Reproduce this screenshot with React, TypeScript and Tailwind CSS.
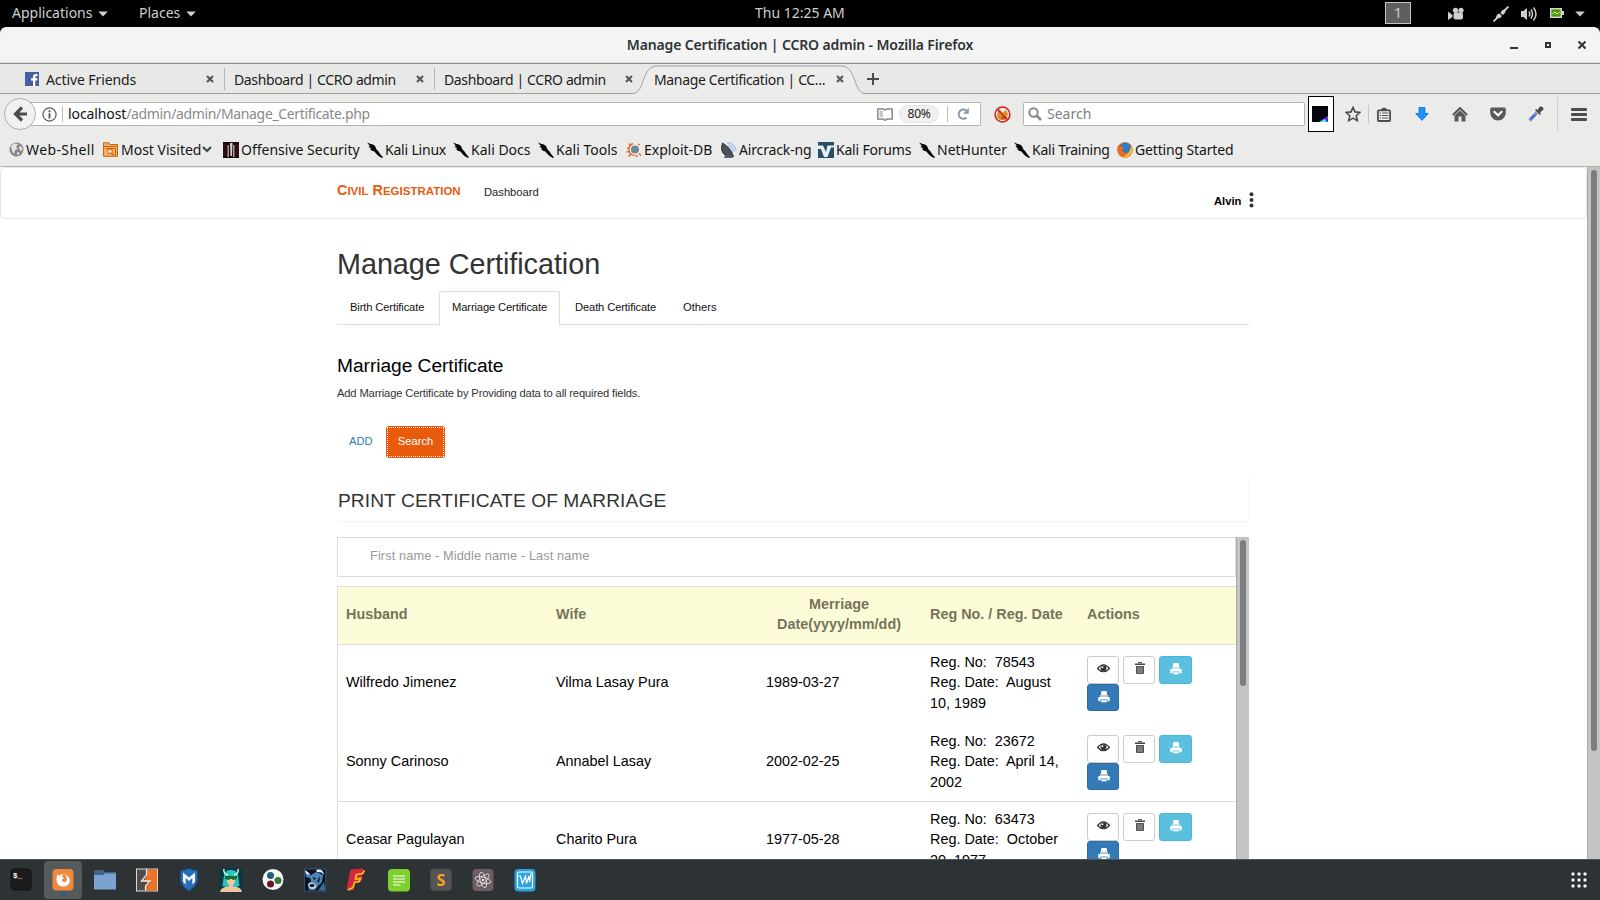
import type { ReactNode } from "react";

const DragonIcon = () => (
  <svg width="16" height="16" viewBox="0 0 16 16">
    <path d="M0 0.300 L3 1.800 L6 2.600 L8.200 4.200 L9.300 7.200 L11.500 9.500 L13.500 12.500 L16 15.300 L15 16 L11.500 14 L9 11.500 L7.500 9.500 L5.500 9 L3 7.300 L4.200 6.300 L1.500 5 L2.800 4 Z" fill="#050505" />
  </svg>
);

const GlobeIcon = () => (
  <svg width="15" height="15" viewBox="0 0 15 15">
    <circle cx="7.500" cy="7.500" r="7" fill="#878787" />
    <path d="M2 4 L5 1.500 L9 2 L7 5 L9 7 L6 8 L5 12 L3 9 Z M10 4 L13 5 L13.500 8 L11 9 Z M8 10 L11 11 L8.500 13.500 Z" fill="#e6e6e6" />
  </svg>
);

const FolderIcon = () => (
  <svg width="15" height="15" viewBox="0 0 15 15">
    <path d="M0.500 0.800 H6 L7 2.500 H14.500 V14.300 H0.500 Z" fill="#f3b069" stroke="#cc660c" />
    <path d="M0.500 4.500 H14.500 M2.500 6.500 H12.500 V14" stroke="#cc660c" fill="none" />
    <circle cx="7" cy="9.300" r="2.300" fill="#fbe3c5" stroke="#cc660c" />
    <path d="M8.500 11 L11 13.500" stroke="#cc660c" strokeWidth="1.500" />
  </svg>
);

const OffsecIcon = () => (
  <svg width="16" height="16" viewBox="0 0 16 16">
    <rect width="16" height="16" fill="#1a0a0a" />
    <rect x="0" y="2" width="4" height="12" fill="#2e1012" />
    <rect x="12" y="2" width="4" height="12" fill="#2e1012" />
    <path d="M4.500 3 H6 V15 H4.500Z M10 3 H11.500 V15 H10Z" fill="#a89c9c" />
    <path d="M7 1 H9.500 L9 14 H7.500 Z" fill="#d6cfcf" />
  </svg>
);

const ExploitIcon = () => (
  <svg width="16" height="16" viewBox="0 0 16 16">
    <path d="M3 1.500 L5 4 M1 6 L4 6.500 M0.500 10 L4 9.500 M2.500 14.500 L5 12 M11 15 L10 12.500 M15 13.500 L12.500 11 M13.500 2 L11.500 4" stroke="#e8662c" strokeWidth="1.500" />
    <path d="M7 1.500 Q2 4 3.500 9.500 Q5 13.500 9 13" stroke="#e8662c" strokeWidth="1.700" fill="none" />
    <circle cx="9" cy="7.500" r="4.700" fill="#6f8796" stroke="#f6f6f6" strokeWidth="1.200" />
  </svg>
);

const DishIcon = () => (
  <svg width="16" height="16" viewBox="0 0 16 16">
    <path d="M6 0.800 Q14 1 15 9 M7 3.500 Q12 4.500 12.500 10" stroke="#b5c9ea" strokeWidth="1.800" fill="none" />
    <path d="M1.500 1 Q-1 7 2 11 Q6 16 12.500 14.500 Q10 6 1.500 1Z" fill="#49545a" stroke="#2d3438" />
    <path d="M4 13 L3 16 H12 L10 14Z" fill="#59646a" />
  </svg>
);

const ForumIcon = () => (
  <svg width="16" height="16" viewBox="0 0 16 16">
    <rect width="16" height="16" fill="#244e69" />
    <path d="M0 3.500 H5 L8 10 L9.500 3.500 H16 V5.500 H13 L9.500 15 H6 L3 7 H0Z" fill="#e9eef0" />
  </svg>
);

const FirefoxIcon = () => (
  <svg width="16" height="16" viewBox="0 0 16 16">
    <circle cx="8" cy="8" r="7.700" fill="#e2601b" />
    <circle cx="8.500" cy="6" r="5.500" fill="#2a7fc4" />
    <path d="M14 3 Q17 8 14 12 Q10 17 4 14 Q-1 10 1 3 L3 5 Q6 4 7 6 L5 8 Q6 11 9 11 Q13 11 13.500 6Z" fill="#ea6a20" />
    <path d="M14.500 4.500 Q17 11 11 14.500 Q8 15.500 6 14.500 Q13 12 13.500 6Z" fill="#fbc03a" />
  </svg>
);

const bookmarks: { label: string; icon: ReactNode; width: string; text?: string; menu?: boolean }[] = [
  { label: "Web-Shell", icon: <GlobeIcon />, width: "w-[94px]", text: "-ml-px tracking-[0.4px]" },
  { label: "Most Visited", icon: <FolderIcon />, width: "w-[120px]", menu: true },
  { label: "Offensive Security", icon: <OffsecIcon />, width: "w-[144px]" },
  { label: "Kali Linux", icon: <DragonIcon />, width: "w-[86px]", text: "tracking-[-0.2px]" },
  { label: "Kali Docs", icon: <DragonIcon />, width: "w-[85px]" },
  { label: "Kali Tools", icon: <DragonIcon />, width: "w-[88px]" },
  { label: "Exploit-DB", icon: <ExploitIcon />, width: "w-[95px]" },
  { label: "Aircrack-ng", icon: <DishIcon />, width: "w-[97px]", text: "tracking-[-0.15px]" },
  { label: "Kali Forums", icon: <ForumIcon />, width: "w-[101px]", text: "tracking-[-0.2px]" },
  { label: "NetHunter", icon: <DragonIcon />, width: "w-[95px]" },
  { label: "Kali Training", icon: <DragonIcon />, width: "w-[103px]", text: "tracking-[-0.25px]" },
  { label: "Getting Started", icon: <FirefoxIcon />, width: "w-[120px]", text: "tracking-[-0.15px]" },
];

const Caret = ({ className = "" }: { className?: string }) => (
  <svg className={className} width="10" height="6" viewBox="0 0 10 6">
    <path d="M0.300 0.500 H9.700 L5 5.500Z" fill="#cfcfcf" />
  </svg>
);

const CloseMark = () => (
  <svg width="8" height="8" viewBox="0 0 8 8">
    <path d="M1 1 L7 7 M7 1 L1 7" stroke="#555a5c" strokeWidth="2.200" />
  </svg>
);

function TopBar() {
  return (
    <div className="flex h-[27px] shrink-0 items-center bg-black text-[14px] text-[#cfcfcf]">
      <div className="ml-3 flex w-[127px] items-center">
        <span className="w-[86px] whitespace-nowrap pb-[2px]">Applications</span>
        <Caret />
      </div>
      <div className="flex w-[616px] items-center">
        <span className="w-[47px] whitespace-nowrap pb-[2px]">Places</span>
        <Caret />
      </div>
      <span className="w-[630px] whitespace-nowrap pb-[2px]">Thu 12:25 AM</span>
      <div className="mb-px flex h-[22px] w-[26px] items-center justify-center border border-[#c4c4c4] bg-[#5e5e5e] pb-px">1</div>
      <svg className="ml-[37px]" width="16" height="14" viewBox="0 0 16 14">
        <circle cx="7.500" cy="3.300" r="2.600" fill="#cfcfcf" />
        <circle cx="13" cy="3.300" r="2.600" fill="#cfcfcf" />
        <rect x="5.500" y="5.500" width="9.500" height="7" rx="2" fill="#cfcfcf" />
        <path d="M0 4.500 L4.500 8 V10 L0 13Z" fill="#cfcfcf" />
      </svg>
      <svg className="ml-[29px]" width="16" height="16" viewBox="0 0 16 16">
        <path d="M0.500 15.500 L5 11 M11 5 L15.500 0.500" stroke="#cfcfcf" strokeWidth="1.800" />
        <path d="M3 12.500 Q3 8 6.500 7.500 L9 10 Q7.500 13 3 12.500Z M7.500 7 Q8.500 3.500 13 3 Q12.500 8 9.500 9Z" fill="#cfcfcf" />
      </svg>
      <svg className="ml-3" width="17" height="16" viewBox="0 0 17 16">
        <path d="M0 5 H2.500 L6 2 V14 L2.500 11 H0Z" fill="#cfcfcf" />
        <path d="M8 5.500 Q9.500 8 8 10.500 M10 3.500 Q13 8 10 12.500 M12.500 1.500 Q17.500 8 12.500 14.500" stroke="#cfcfcf" strokeWidth="1.500" fill="none" />
      </svg>
      <svg className="mb-px ml-3" width="14" height="10" viewBox="0 0 14 10">
        <rect x="0.700" y="0.700" width="10.600" height="8.600" fill="#4e9a06" stroke="#d6d6d6" strokeWidth="1.400" />
        <rect x="12" y="3" width="2" height="4" fill="#cfcfcf" />
        <path d="M2.500 6 L5 4 L7 6 L9.500 4" stroke="#e8f5dc" fill="none" strokeWidth="1" />
      </svg>
      <Caret className="ml-[11px]" />
    </div>
  );
}

function TitleBar() {
  return (
    <div className="bg-black">
      <div className="relative flex h-[37px] items-center justify-center rounded-t-[6px] border-b border-[#8e8e88] bg-[#f4f4f4] shadow-[inset_0_-1px_0_#dcdcda]">
        <span className="whitespace-nowrap pb-[2px] text-[14px] font-semibold tracking-[-0.14px] text-[#2e3436]">
          Manage Certification | CCRO admin - Mozilla Firefox
        </span>
        <svg className="absolute right-0 top-0" width="100" height="36" viewBox="0 0 100 36">
          <path d="M10 21 H18" stroke="#2e3436" strokeWidth="2" />
          <rect x="46" y="16" width="4" height="4" fill="none" stroke="#2e3436" strokeWidth="2" />
          <path d="M78.500 14.500 L85.500 21.500 M85.500 14.500 L78.500 21.500" stroke="#2e3436" strokeWidth="2" />
        </svg>
      </div>
    </div>
  );
}

function TabStrip() {
  return (
    <div className="relative flex h-[30px] shrink-0 items-center border-b border-[#a0a09c] bg-[#e8e8e7] text-[14px] text-[#1c1c1c]">
      <div className="mt-px flex h-[22px] w-[225px] items-center border-r border-[#b5b5b2] pl-[25px]">
        <svg width="14" height="14" viewBox="0 0 14 14">
          <rect width="14" height="14" fill="#4460a0" />
          <path d="M8 14 V8.500 H6 V6.300 H8 V4.800 Q8 2 10.800 2 H12.500 V4.200 H11.200 Q10.300 4.200 10.300 5 V6.300 H12.500 L12.200 8.500 H10.300 V14Z" fill="#fff" />
        </svg>
        <span className="ml-[7px] w-[160px] whitespace-nowrap tracking-[-0.1px]">Active Friends</span>
        <CloseMark />
      </div>
      <div className="mt-px flex h-[22px] w-[210px] items-center border-r border-[#b5b5b2] pl-[9px]">
        <span className="w-[182px] whitespace-nowrap tracking-[-0.37px]">Dashboard | CCRO admin</span>
        <CloseMark />
      </div>
      <div className="mt-px flex w-[198px] items-center pl-[9px]">
        <span className="w-[183px] whitespace-nowrap tracking-[-0.37px]">Dashboard | CCRO admin</span>
        <CloseMark />
      </div>
      <div className="relative flex h-full w-[232px] items-center pl-[21px] pt-px">
        <svg className="absolute left-0 top-0" width="232" height="31" viewBox="0 0 232 31">
          <path d="M0 31 V29.500 C12 29.500 8 2.500 24 2.500 H208 C224 2.500 220 29.500 232 29.500 V31Z" fill="#ececeb" />
          <path d="M0 29.500 C12 29.500 8 2 24 2 H208 C224 2 220 29.500 232 29.500" fill="none" stroke="#9da3a8" />
        </svg>
        <span className="relative w-[182px] whitespace-nowrap tracking-[-0.35px]">Manage Certification | CC...</span>
        <span className="relative"><CloseMark /></span>
      </div>
      <svg className="ml-[2px] mt-px" width="12" height="12" viewBox="0 0 12 12">
        <path d="M0 6 H12 M6 0 V12" stroke="#4c4c4c" strokeWidth="2" />
      </svg>
    </div>
  );
}

function NavBar() {
  return (
    <div className="flex h-[40px] shrink-0 items-center bg-[#ebebea] text-[14px]">
      <div className="relative ml-[4px] flex h-[32px] w-[977px] items-center">
        <div className="absolute left-[20px] right-0 top-[4px] h-[24px] rounded-[2px] border border-[#b4b4b0] bg-white" />
        <div className="relative flex size-[32px] items-center justify-center rounded-full border border-[#b0b0ac] bg-[#f1f1f0]">
          <svg width="15" height="16" viewBox="0 0 15 16">
            <path d="M9 1.500 L2.500 8 L9 14.500 M3 8 H14" stroke="#4d4d4d" strokeWidth="3.200" fill="none" />
          </svg>
        </div>
        <svg className="relative ml-[6px]" width="15" height="15" viewBox="0 0 15 15">
          <circle cx="7.500" cy="7.500" r="6.600" fill="none" stroke="#585858" strokeWidth="1.200" />
          <path d="M7.500 3.300 V5.200 M7.500 6.300 V11.500" stroke="#505050" strokeWidth="1.800" />
        </svg>
        <span className="relative ml-[5px] h-4 w-px bg-[#bdbdbd]" />
        <span className="relative ml-[5px] w-[809px] whitespace-nowrap pb-[2px] tracking-[-0.35px] text-[#8a8a8a]">
          <span className="tracking-[-0.1px] text-[#111]">localhost</span>/admin/admin/Manage_Certificate.php
        </span>
        <svg className="relative" width="16" height="13" viewBox="0 0 16 13">
          <path d="M0.800 1 H6.500 L8 2 L9.500 1 H15.200 V11 H10 L8 12.300 L6 11 H0.800Z" fill="none" stroke="#85898b" strokeWidth="1.500" />
          <path d="M2.500 4 H6 M2.500 6 H5.500 M2.500 8 H6" stroke="#85898b" />
        </svg>
        <span className="relative ml-[6px] flex h-[18px] w-[40px] items-center justify-center rounded-full border border-[#e2e2e2] bg-[#f0f0f0] text-[12px] tracking-[-0.3px] text-[#222]">80%</span>
        <span className="relative ml-[8px] h-4 w-px bg-[#bdbdbd]" />
        <svg className="relative ml-[9px]" width="13" height="14" viewBox="0 0 13 14">
          <path d="M9.500 10.500 A4.600 4.600 0 1 1 9.800 4.200" stroke="#8b98a5" strokeWidth="2" fill="none" />
          <path d="M11.800 1 V6.800 H6Z" fill="#8b98a5" />
        </svg>
      </div>
      <svg className="ml-[13px]" width="17" height="17" viewBox="0 0 17 17">
        <path d="M4 5 L6 3 L8 7 L12 4 L14 8 L12 14 L6 14 L3 11Z" fill="#e08a28" />
        <path d="M8 10 H11 V13 H7Z" fill="#a85c18" />
        <circle cx="8.500" cy="8.500" r="7.400" fill="none" stroke="#cc1f1f" strokeWidth="1.500" />
        <path d="M3.300 3.300 L13.700 13.700" stroke="#cc1f1f" strokeWidth="1.400" />
      </svg>
      <div className="ml-[12px] flex h-[24px] w-[282px] items-center rounded-[2px] border border-[#b4b4b0] bg-white pl-[4px] text-[#808080]">
        <svg width="14" height="14" viewBox="0 0 14 14">
          <circle cx="5.500" cy="5.500" r="4.200" fill="none" stroke="#8a8a8a" strokeWidth="2" />
          <path d="M8.500 8.500 L13 13" stroke="#8a8a8a" strokeWidth="2.600" />
        </svg>
        <span className="ml-[5px] pb-[2px]">Search</span>
      </div>
      <div className="ml-[3px] flex h-[36px] w-[26px] items-center border border-black bg-white pl-[3px]">
        <svg width="16" height="16" viewBox="0 0 16 16">
          <rect width="16" height="16" fill="#05050f" />
          <path d="M7 16 L16 10 V16Z" fill="#19cdf0" />
          <path d="M11 13.500 L16 10 V16Z" fill="#6a1fe0" />
          <path d="M9 16 L13 13 L14 16Z" fill="#5df1ff" />
        </svg>
      </div>
      <svg className="ml-[11px]" width="16" height="16" viewBox="0 0 16 16">
        <path d="M8 1.400 L10 5.900 L14.900 6.400 L11.200 9.700 L12.300 14.600 L8 12.100 L3.700 14.600 L4.800 9.700 L1.100 6.400 L6 5.900Z" fill="none" stroke="#4d4d4d" strokeWidth="1.600" />
      </svg>
      <span className="ml-[7px] h-[18px] w-px bg-[#c4c4c2]" />
      <svg className="ml-[8px]" width="14" height="15" viewBox="0 0 14 15">
        <path d="M3.500 3 Q7 -2 10.500 3" fill="#4d4d4d" />
        <rect x="0.900" y="3.400" width="12.200" height="10.600" rx="1" fill="#f4f4f3" stroke="#4d4d4d" strokeWidth="1.800" />
        <path d="M2.500 6 H4 M2.500 8.500 H4 M2.500 11 H4 M5 6 H11.500 M5 8.500 H11.500 M5 11 H11.500" stroke="#4d4d4d" strokeWidth="1.200" />
      </svg>
      <svg className="ml-[24px]" width="14" height="14" viewBox="0 0 14 14">
        <path d="M4 0.500 H10 V6.500 H13.300 L7 13.400 L0.700 6.500 H4Z" fill="#1e90ff" stroke="#0a6fdc" strokeWidth="0.800" />
      </svg>
      <svg className="ml-[23px]" width="16" height="15" viewBox="0 0 16 15">
        <path d="M0.800 8 L8 1 L15.200 8" fill="none" stroke="#4d4d4d" strokeWidth="1.800" />
        <path d="M2.500 8.500 L8 3.300 L13.500 8.500 V14.500 H9.500 V9.500 H6.500 V14.500 H2.500Z" fill="#5a5a5a" />
      </svg>
      <svg className="ml-[22px]" width="16" height="14" viewBox="0 0 16 14">
        <path d="M1.500 0.500 H14.500 Q15.800 0.500 15.800 2 V6 Q15 13 8 13.600 Q1 13 0.200 6 V2 Q0.200 0.500 1.500 0.500Z" fill="#5a5a5a" />
        <path d="M4.300 4.800 L8 8.300 L11.700 4.800" stroke="#fff" strokeWidth="2" fill="none" strokeLinecap="round" />
      </svg>
      <svg className="ml-[22px]" width="16" height="16" viewBox="0 0 16 16">
        <path d="M1.500 14.500 L9 6.500" stroke="#8e98b8" strokeWidth="3.400" />
        <path d="M2.500 13.300 L7 8.800" stroke="#3d6be0" strokeWidth="2" />
        <path d="M7 4 L12 9 L13 7.500 L12 6.500 L15.500 3.500 Q15.500 0 12 0.500 L9.500 4 L8.300 3Z" fill="#4a4a4a" />
      </svg>
      <span className="ml-[13px] h-[34px] w-px bg-[#cfcfcd]" />
      <svg className="ml-[13px]" width="16" height="13" viewBox="0 0 16 13">
        <path d="M1 1.500 H15 M1 6.500 H15 M1 11.500 H15" stroke="#4d4d4d" strokeWidth="2.800" strokeLinecap="round" />
      </svg>
    </div>
  );
}

function BookmarksBar() {
  return (
    <div className="flex h-[33px] shrink-0 items-center border-b border-[#b4b4ae] bg-[#ebebea] pl-[9px] text-[14px] text-[#151515]">
      {bookmarks.map((b) => (
        <div key={b.label} className={`flex shrink-0 items-center whitespace-nowrap pb-px ${b.width}`}>
          <span className="flex w-[18px] shrink-0">{b.icon}</span>
          <span className={`pb-px ${b.text ?? ""}`}>{b.label}</span>
          {b.menu && (
            <svg className="ml-[1px]" width="10" height="7" viewBox="0 0 10 7">
              <path d="M1 1 L5 5 L9 1" stroke="#3f474c" strokeWidth="2.200" fill="none" />
            </svg>
          )}
        </div>
      ))}
    </div>
  );
}

const EyeIcon = () => (
  <svg width="13" height="9" viewBox="0 0 12 8">
    <path d="M0.500 4 Q6 -2.600 11.500 4 Q6 10 0.500 4Z" fill="none" stroke="#333" strokeWidth="1.100" />
    <circle cx="6" cy="3.700" r="2.700" fill="#333" />
    <circle cx="5" cy="2.800" r="0.900" fill="#fff" />
  </svg>
);

const TrashIcon = () => (
  <svg width="10" height="12" viewBox="0 0 10 12">
    <path d="M3.500 1.500 V0.500 H6.500 V1.500" fill="none" stroke="#444" />
    <path d="M0 1.500 H10 V3 H0Z" fill="#444" />
    <path d="M1 4 H9 V11 Q9 12 8 12 H2 Q1 12 1 11Z" fill="#555" />
    <path d="M3.200 5 V11 M5 5 V11 M6.800 5 V11" stroke="#bbb" strokeWidth="0.700" />
  </svg>
);

const PrintIcon = () => (
  <svg width="12" height="12" viewBox="0 0 12 12">
    <path d="M4 0 H8 L9 1 V4 H3 V1Z" fill="#fff" />
    <path d="M2 4 H10 V6 H2Z" fill="#fff" fillOpacity="0.600" />
    <path d="M0.300 6 H11.700 V10.300 H9.500 V8.500 H2.500 V10.300 H0.300Z" fill="#fff" />
    <path d="M3.200 9.300 H8.800 V11.300 H3.200Z" fill="#fff" />
  </svg>
);

const rows = [
  { husband: "Wilfredo Jimenez", wife: "Vilma Lasay Pura", date: "1989-03-27", no: "78543", reg: ["August", "10, 1989"] },
  { husband: "Sonny Carinoso", wife: "Annabel Lasay", date: "2002-02-25", no: "23672", reg: ["April 14,", "2002"] },
  { husband: "Ceasar Pagulayan", wife: "Charito Pura", date: "1977-05-28", no: "63473", reg: ["October", "20, 1977"] },
];

const rowStyles = ["h-[79px] pb-[4px]", "h-[78px] border-b border-[#ddd] pb-[2px]", "h-[78px] pb-[3px]"];

const button = "flex h-[27.6px] items-start justify-center rounded-[3px] border";

function RecordsTable() {
  return (
    <div className="mt-[9px] border-l border-t border-[#ddd] text-[14.4px] leading-[20.4px] text-black">
      <div className="grid h-[58px] grid-cols-[210px_210px_164px_157px_1fr] items-center border-b border-[#ddd] bg-[#fdfcd9] pb-[3px] font-bold leading-[20px] text-[#75745a]">
        <div className="pl-2">Husband</div>
        <div className="pl-2">Wife</div>
        <div className="pr-[2px] text-center">Merriage<br />Date(yyyy/mm/dd)</div>
        <div className="pl-2">Reg No. / Reg. Date</div>
        <div className="pl-2">Actions</div>
      </div>
      {rows.map((r, i) => (
        <div key={r.no} className={`grid grid-cols-[210px_210px_164px_157px_1fr] items-center ${rowStyles[i]}`}>
          <div className="pl-2">{r.husband}</div>
          <div className="pl-2">{r.wife}</div>
          <div className="pl-2">{r.date}</div>
          <div className="whitespace-pre pl-2">{`Reg. No:  ${r.no}\nReg. Date:  ${r.reg[0]}\n${r.reg[1]}`}</div>
          <div className="flex flex-wrap gap-x-1 self-start pl-2 pt-[11px]">
            <div className={`${button} w-[32px] border-[#ccc] bg-white pl-px pt-[7px]`}><EyeIcon /></div>
            <div className={`${button} w-[32px] border-[#ccc] bg-white pl-[2px] pt-[5px]`}><TrashIcon /></div>
            <div className={`${button} w-[33px] border-[#46b8da] bg-[#5bc0de] pt-[6px]`}><PrintIcon /></div>
            <div className="basis-full" />
            <div className={`${button} w-[32px] border-[#2e6da4] bg-[#337ab7] pl-px pt-[6px]`}><PrintIcon /></div>
          </div>
        </div>
      ))}
    </div>
  );
}

function Page() {
  return (
    <div className="h-[692px] w-[1587px] overflow-hidden bg-white font-['Liberation_Sans',Arial,sans-serif]">
      <div className="flex h-[52px] items-start rounded-[4px] border border-[#e7e7e7] pl-[336px]">
        <span className="mt-[11px] w-[147px] whitespace-nowrap text-[14.4px] font-bold leading-[22px] text-[#e95b0c]">
          C<span className="text-[11.5px] uppercase">ivil</span> R<span className="text-[11.5px] uppercase">egistration</span>
        </span>
        <span className="mt-[16px] w-[730px] text-[11.2px] leading-4 text-[#222]">Dashboard</span>
        <span className="mt-[25px] text-[11.2px] font-bold leading-4 text-black">Alvin</span>
        <svg className="ml-[8px] mt-[24px]" width="5" height="16" viewBox="0 0 5 16">
          <circle cx="2.500" cy="2.200" r="2" fill="#333" />
          <circle cx="2.500" cy="8" r="2" fill="#333" />
          <circle cx="2.500" cy="13.500" r="2" fill="#333" />
        </svg>
      </div>
      <div className="ml-[337px] w-[912px]">
        <h1 className="pt-[29px] text-[28.8px] leading-[32px] tracking-[-0.05px] text-[#333]">Manage Certification</h1>
        <div className="mt-[11px] flex h-[34px] items-stretch text-[11.2px] leading-[32px] tracking-[-0.13px] text-[#111]">
          <div className="w-[102px] border-b border-[#ddd] pl-[13px]">Birth Certificate</div>
          <div className="w-[121px] rounded-t-[3px] border border-b-0 border-[#ddd] pl-[12px] leading-[30px]">Marriage Certificate</div>
          <div className="w-[108px] border-b border-[#ddd] pl-[15px]">Death Certificate</div>
          <div className="flex-1 border-b border-[#ddd] pl-[15px] tracking-normal">Others</div>
        </div>
        <h2 className="mt-[30px] text-[19.2px] leading-[22px] tracking-[-0.05px] text-black">Marriage Certificate</h2>
        <p className="mt-[8px] text-[11.2px] leading-4 tracking-[-0.155px] text-[#333]">
          Add Marriage Certificate by Providing data to all required fields.
        </p>
        <div className="mt-[25px] flex items-center text-[11.2px]">
          <span className="w-[49px] pb-[2px] pl-[12px] text-[#337ab7]">ADD</span>
          <div className="rounded-[3px] bg-[#e95b0c] p-px">
            <div className="flex h-[30px] w-[57px] items-center justify-center border border-dotted border-white pb-[2px] text-white">Search</div>
          </div>
        </div>
        <div className="mt-[17px] flex h-[46px] items-center rounded-[3px] border-r border-[#fafafa] pl-px pt-[6px] text-[19.2px] tracking-[0.07px] text-[#333] shadow-[0_1px_1px_rgba(0,0,0,0.05)]">
          PRINT CERTIFICATE OF MARRIAGE
        </div>
        <div className="mt-[16px] flex">
          <div className="w-[899px]">
            <div className="h-[40px] border border-[#ddd] pl-[32px] pt-[9px] text-[12.8px] leading-[18px] tracking-[0.09px] text-[#999]">
              First name - Middle name - Last name
            </div>
            <RecordsTable />
          </div>
          <div className="flex h-[340px] w-[13px] justify-center border-l border-[#aaacac] bg-[#c3c5c4] pt-[3px]">
            <div className="h-[146px] w-[6px] rounded-full bg-[#7a7e7e]" />
          </div>
        </div>
      </div>
    </div>
  );
}

const dockIcons: ReactNode[] = [
  <g key="terminal">
    <rect x="1" y="1" width="20" height="21" rx="3" fill="#1b1b1b" stroke="#111" />
    <text x="3" y="9.500" fontSize="7.500" fontWeight="bold" fill="#fff" fontFamily="Liberation Mono">$_</text>
  </g>,
  <g key="firefox">
    <rect x="0.500" y="1" width="21" height="21.500" rx="4" fill="#f0883e" />
    <path d="M5.500 6 L7 8 Q8.500 6 11.500 6 L10 8.500 L12 10 L10 11.500 Q10 14 12.500 14 Q16 13.500 14.500 9 Q13.500 7 12.500 6 Q18.500 8.500 17.800 13.500 Q16.500 18.500 11 18.700 Q5 18 4.500 12 Q4.500 8 5.500 6Z" fill="#fff" />
  </g>,
  <g key="files">
    <path d="M0 2 H9 L11 4 H22 V9 H0Z" fill="#3f6488" />
    <path d="M0 7 H9 L11 5.500 H22 V21.500 H0Z" fill="#7ba3d2" />
  </g>,
  <g key="burp">
    <rect x="0.500" y="1" width="21" height="22" fill="#4d4d4d" stroke="#d8d8d8" />
    <path d="M10.500 1.500 H21 V22.500 H9.500 V18.500 L15 14 H7.500 L10.500 9Z" fill="#ee7427" />
    <path d="M10.500 1 V7 L5.500 13 H14 L9.500 18 V22.500" fill="none" stroke="#f5e9df" strokeWidth="1.300" />
  </g>,
  <g key="metasploit">
    <path d="M2.500 2.500 Q7 2.500 11 0.500 Q15 2.500 19.500 2.500 V13 Q18 19 11 23 Q4 19 2.500 13Z" fill="#2a6db8" stroke="#174a84" />
    <path d="M5 14 V4.500 L11 9.500 L17 4.500 V14 L14.300 16.500 V10 L11 13 L7.700 10 V16.500Z" fill="#f2f6fa" />
  </g>,
  <g key="armitage">
    <rect x="-0.500" y="0" width="23" height="24" fill="#063846" />
    <path d="M4 7 Q5 2 11 2 Q17 2 18 7 L19.500 18 L15 19 H7 L2.500 18Z" fill="#27c5bd" />
    <path d="M4 1 Q3 6 8 7 M18 1 Q19 6 14 7" stroke="#e9f5e0" strokeWidth="1.500" fill="none" />
    <path d="M7 11 H15 V14 L13 17 H9 L7 14Z" fill="#f2c7a0" />
    <path d="M5 8 H17 V11 L13 12 L11 10.500 L9 12 L5 11Z" fill="#1d6a39" />
    <path d="M0 24 Q1 18.500 9 18.500 V16 H13 V18.500 Q21 18.500 22 24Z" fill="#f0c59d" />
  </g>,
  <g key="maltego">
    <circle cx="11" cy="11.500" r="10.500" fill="#f7f7f7" />
    <circle cx="8.500" cy="7.500" r="3.500" fill="#235e80" />
    <circle cx="16" cy="12.500" r="3.500" fill="#2f7a34" />
    <circle cx="8.500" cy="16" r="3.500" fill="#6b1424" />
  </g>,
  <g key="beef">
    <rect x="0.300" y="1" width="21.500" height="22" fill="#0b1320" stroke="#3c6a96" strokeWidth="0.700" />
    <path d="M1 4 Q3 8 7 7 L12 4 L19 7 L18 14 L14 18 L11 22 H5 L4 18 L7 13 L6 10 L2 9Z" fill="#4b83b8" />
    <path d="M12 2 Q19 0 20 7 L17.500 4.500 L13 4Z M1 2 Q1 7 6 7 L5 5Z" fill="#e8f1f8" />
    <path d="M8 9 L12 10 L11 12 Z M13 13 L16 8 L15 15Z" fill="#0b1320" />
    <path d="M4 16 Q8 13 11.500 16.500 Q13 20 9 21 Q4.500 21 4 16Z" fill="#cfe2f0" />
    <ellipse cx="8" cy="17.500" rx="2.500" ry="1.700" fill="#0b1320" />
    <path d="M20 14 L21.500 22.500 H14Z" fill="#3c6a96" />
  </g>,
  <g key="faraday">
    <path d="M4.500 1.500 L17 0.500 L18 5 L16 8 L16.500 11 L14 14.500 L9 15 L7.500 22 L0.500 22.500 L2 14Z" fill="#d7263d" />
    <path d="M18.500 2.500 L16.500 5.500 L10.500 6.500 L9.500 11 L14.500 10.500 L13 13.500 L8.500 14.500 L7 19.500 L2 22" fill="none" stroke="#f5c518" strokeWidth="1.700" />
  </g>,
  <g key="leafpad">
    <rect x="0" y="1" width="22" height="22.500" rx="4" fill="#7fd02f" />
    <path d="M5 8 H17 M5 11 H17 M5 14 H17 M5 17 H12.500" stroke="#fff" strokeWidth="1.200" />
  </g>,
  <g key="sublime">
    <rect x="0.500" y="1" width="21" height="21.500" rx="3" fill="#545454" stroke="#484848" />
    <text x="11" y="17.500" fontSize="16" fontWeight="bold" textAnchor="middle" fill="#f8a526" fontFamily="Noto Sans">S</text>
  </g>,
  <g key="atom">
    <rect x="0.500" y="1" width="21" height="22" rx="4" fill="#6a5e62" />
    <g fill="none" stroke="#e4dcdc" strokeWidth="0.900">
      <ellipse cx="11" cy="12" rx="8" ry="3" transform="rotate(15 11 12)" />
      <ellipse cx="11" cy="12" rx="8" ry="3" transform="rotate(75 11 12)" />
      <ellipse cx="11" cy="12" rx="8" ry="3" transform="rotate(135 11 12)" />
    </g>
    <circle cx="11" cy="12" r="1.300" fill="#e4dcdc" />
  </g>,
  <g key="monitor">
    <rect x="0.500" y="1" width="21" height="22.500" rx="4" fill="#2ba3dc" />
    <rect x="3.500" y="4" width="15" height="16" rx="1.500" fill="none" stroke="#fff" strokeWidth="1.200" />
    <path d="M3.500 8 H6.500 L8.500 15.500 L11.500 8 L12.500 15.500 L15 8 L15.500 14 L17 5.500" fill="none" stroke="#fff" strokeWidth="1.200" />
  </g>,
];

function Dock() {
  return (
    <div className="flex h-[41px] shrink-0 items-center border-t border-[#4c5456] bg-[#2d3335]">
      {dockIcons.map((icon, i) => (
        <div key={i} className="flex h-[40px] w-[42px] items-center justify-center">
          <div className={i === 1 ? "relative flex h-[38px] w-[38px] items-center justify-center rounded-[4px] bg-[#555b5b]" : "flex"}>
            <svg className="overflow-visible" width="22" height="24" viewBox="0 0 22 24">{icon}</svg>
            {i === 1 && <span className="absolute bottom-[2px] left-[17px] size-[4px] rounded-full bg-[#215d9c]" />}
          </div>
        </div>
      ))}
      <svg className="ml-auto mr-[13px]" width="16" height="16" viewBox="0 0 16 16">
        {[2, 8, 14].map((y) => [2, 8, 14].map((x) => <circle key={`${x}-${y}`} cx={x} cy={y} r="1.700" fill="#f2f2f2" />))}
      </svg>
    </div>
  );
}

export default function App() {
  return (
    <div className="flex h-[900px] w-[1600px] flex-col overflow-hidden bg-white font-['Noto_Sans',sans-serif]">
      <TopBar />
      <TitleBar />
      <TabStrip />
      <NavBar />
      <BookmarksBar />
      <div className="flex h-[692px] shrink-0">
        <Page />
        <div className="flex w-[13px] justify-center border-l border-[#aaacac] bg-[#c3c5c4] pt-[3px]">
          <div className="h-[581px] w-[6px] rounded-full bg-[#7a7e7e]" />
        </div>
      </div>
      <Dock />
    </div>
  );
}
